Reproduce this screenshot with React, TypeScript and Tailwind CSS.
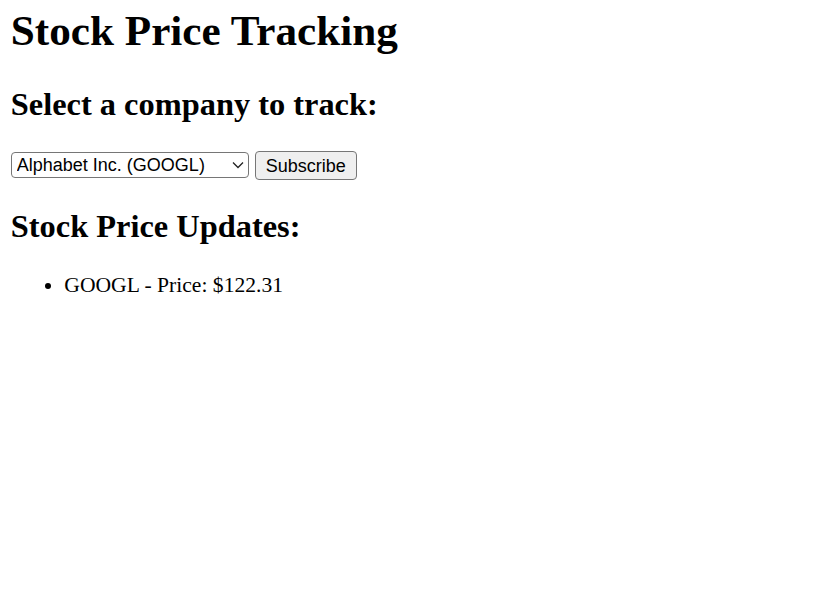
import { useState } from "react";

const COMPANIES = [
  { symbol: "GOOGL", name: "Alphabet Inc." },
  { symbol: "AAPL", name: "Apple Inc." },
  { symbol: "MSFT", name: "Microsoft Corp." },
  { symbol: "AMZN", name: "Amazon.com Inc." },
];

export default function App() {
  const [symbol, setSymbol] = useState("GOOGL");
  const [updates, setUpdates] = useState([{ symbol: "GOOGL", price: "122.31" }]);

  const subscribe = () => {
    setUpdates(prev => [...prev, { symbol, price: (100 + Math.random() * 50).toFixed(2) }]);
  };

  return (
    <div className="min-h-screen bg-white px-[10.8px] font-['Liberation_Serif','Times_New_Roman',serif] text-black">
      <h1 className="pt-[6px] text-[43.2px] font-bold leading-[50px]">Stock Price Tracking</h1>

      <h2 className="mt-[29px] text-[32.4px] font-bold leading-[38px]">Select a company to track:</h2>

      <div className="mt-[28px] flex items-center gap-[6px] font-['Liberation_Sans',Arial,sans-serif] text-[18px]">
        <div className="relative">
          <select
            value={symbol}
            onChange={e => setSymbol(e.target.value)}
            className="h-[26px] w-[238px] appearance-none rounded-[4px] border border-[#767676] bg-white pl-[5px] pr-[24px] leading-[22px] outline-none"
          >
            {COMPANIES.map(c => (
              <option key={c.symbol} value={c.symbol}>
                {c.name} ({c.symbol})
              </option>
            ))}
          </select>
          <svg
            className="pointer-events-none absolute right-[5px] top-[9px]"
            width="12"
            height="8"
            viewBox="0 0 12 8"
            fill="none"
          >
            <path d="M1 1.5l5 5 5-5" stroke="#222" strokeWidth="1.3" />
          </svg>
        </div>
        <button
          onClick={subscribe}
          className="h-[29px] rounded-[4px] border border-[#767676] bg-[#efefef] px-[10px] leading-[24px]"
        >
          Subscribe
        </button>
      </div>

      <h2 className="mt-[27px] text-[32.4px] font-bold leading-[38px]">Stock Price Updates:</h2>

      <ul className="mt-[28px] list-disc pl-[53.5px] text-[21.6px] leading-[25px]">
        {updates.map((u, i) => (
          <li key={i}>
            {u.symbol} - Price: ${u.price}
          </li>
        ))}
      </ul>
    </div>
  );
}
